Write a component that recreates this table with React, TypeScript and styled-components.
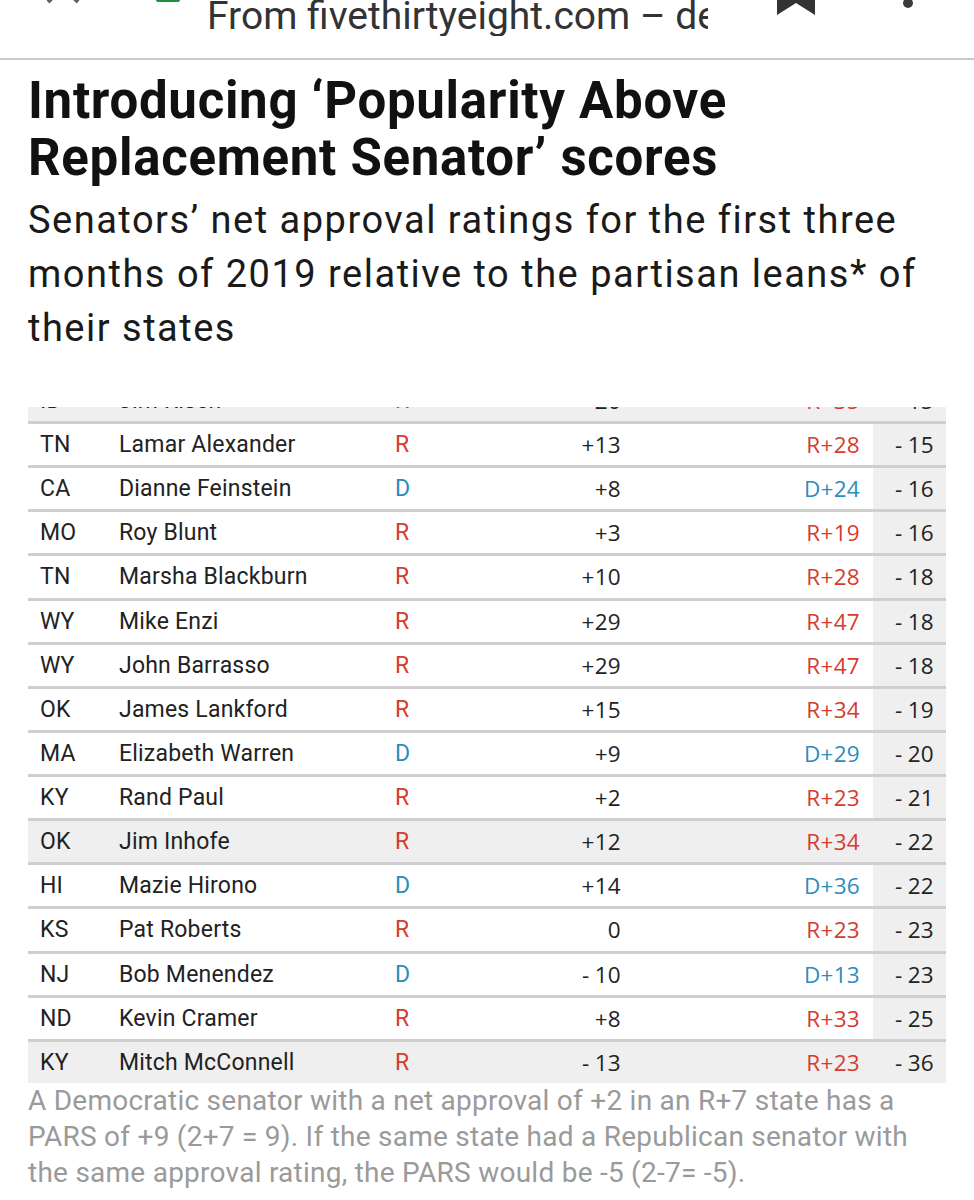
import React from "react";
import styled, { createGlobalStyle } from "styled-components";

const GlobalStyle = createGlobalStyle`
  html, body {
    margin: 0;
    padding: 0;
    background: #fff;
  }
  body {
    font-family: Roboto, "Liberation Sans", sans-serif;
    color: #222;
  }
`;

const RED = "#d63b2f";
const BLUE = "#2b8cbf";
const SHADE = "#efefef";

type Party = "R" | "D";

interface Senator {
  state: string;
  name: string;
  party: Party;
  approval: string;
  lean: string;
  pars: string;
  shaded?: boolean;
}

const senators: Senator[] = [
  { state: "TN", name: "Lamar Alexander", party: "R", approval: "+13", lean: "R+28", pars: "-15" },
  { state: "CA", name: "Dianne Feinstein", party: "D", approval: "+8", lean: "D+24", pars: "-16" },
  { state: "MO", name: "Roy Blunt", party: "R", approval: "+3", lean: "R+19", pars: "-16" },
  { state: "TN", name: "Marsha Blackburn", party: "R", approval: "+10", lean: "R+28", pars: "-18" },
  { state: "WY", name: "Mike Enzi", party: "R", approval: "+29", lean: "R+47", pars: "-18" },
  { state: "WY", name: "John Barrasso", party: "R", approval: "+29", lean: "R+47", pars: "-18" },
  { state: "OK", name: "James Lankford", party: "R", approval: "+15", lean: "R+34", pars: "-19" },
  { state: "MA", name: "Elizabeth Warren", party: "D", approval: "+9", lean: "D+29", pars: "-20" },
  { state: "KY", name: "Rand Paul", party: "R", approval: "+2", lean: "R+23", pars: "-21" },
  { state: "OK", name: "Jim Inhofe", party: "R", approval: "+12", lean: "R+34", pars: "-22", shaded: true },
  { state: "HI", name: "Mazie Hirono", party: "D", approval: "+14", lean: "D+36", pars: "-22" },
  { state: "KS", name: "Pat Roberts", party: "R", approval: "0", lean: "R+23", pars: "-23" },
  { state: "NJ", name: "Bob Menendez", party: "D", approval: "-10", lean: "D+13", pars: "-23" },
  { state: "ND", name: "Kevin Cramer", party: "R", approval: "+8", lean: "R+33", pars: "-25" },
  { state: "KY", name: "Mitch McConnell", party: "R", approval: "-13", lean: "R+23", pars: "-36", shaded: true },
];

/* browser chrome */

const TopBar = styled.header`
  display: flex;
  align-items: flex-start;
  height: 58px;
  padding-left: 45px;
  overflow: hidden;
  border-bottom: 2px solid #cacaca;
`;

const CloseIcon = styled.svg`
  width: 36px;
  height: 36px;
  margin-top: -31px;
  flex: none;
`;

const LockIcon = styled.svg`
  width: 26px;
  height: 30px;
  margin-top: -28px;
  margin-left: 74px;
  flex: none;
`;

const UrlBox = styled.div`
  width: 501px;
  margin-left: 26px;
  overflow: hidden;
  white-space: nowrap;
  font-size: 39px;
  line-height: 40px;
  margin-top: -4px;
  color: #333;
  flex: none;
`;

const BookmarkIcon = styled.svg`
  width: 38px;
  height: 40px;
  margin-top: -25px;
  margin-left: 69px;
  flex: none;
`;

const MenuDot = styled.span`
  width: 10px;
  height: 10px;
  margin-top: -2px;
  margin-left: 88px;
  border-radius: 50%;
  background: #3a3a3a;
  flex: none;
`;

/* article */

const Article = styled.main`
  padding: 12px 28px 0;
`;

const Title = styled.h1`
  margin: 0;
  font-size: 51px;
  line-height: 57px;
  letter-spacing: 0.7px;
  font-weight: 700;
  color: #111;
`;

const Subtitle = styled.p`
  margin: 7px 0 0;
  font-size: 38px;
  line-height: 54px;
  letter-spacing: 1.5px;
  color: #1a1a1a;
`;

const TableWindow = styled.div`
  margin-top: 52px;
  overflow: hidden;
`;

const Rows = styled.div`
  margin-top: -28px;
`;

const Row = styled.div<{ $shaded?: boolean }>`
  display: grid;
  grid-template-columns: 91px 276px 125px 101px 252px 73px;
  align-items: center;
  height: 41.14px;
  border-top: 3px solid #cfcfcf;
  background: ${(p) => (p.$shaded ? SHADE : "#fff")};

  &:first-child {
    border-top: none;
    height: 42px;
  }
`;

const Cell = styled.div`
  height: 100%;
  display: flex;
  align-items: center;
  font-size: 23px;
  letter-spacing: 0.2px;
  white-space: nowrap;
`;

const StateCell = styled(Cell)`
  padding-left: 12px;
`;

const PartyCell = styled(Cell)<{ $party: Party }>`
  color: ${(p) => (p.$party === "R" ? RED : BLUE)};
`;

const NumCell = styled(Cell)<{ $party?: Party }>`
  justify-content: flex-end;
  font-family: "Open Sans", "DejaVu Sans", sans-serif;
  font-size: 22.5px;
  letter-spacing: 0.3px;
  color: ${(p) => (p.$party ? (p.$party === "R" ? RED : BLUE) : "#222")};
`;

const LeanCell = styled(NumCell)`
  padding-right: 13px;
`;

const ParsCell = styled(NumCell)`
  padding-right: 12px;
  background: ${SHADE};
`;

const MinusSign = styled.span`
  margin-right: 5px;
`;

const Footnote = styled.p`
  margin: 0;
  font-size: 28px;
  line-height: 36px;
  letter-spacing: 0.25px;
  color: #9a9a9a;
`;

const Signed: React.FC<{ value: string }> = ({ value }) =>
  value.startsWith("-") ? (
    <>
      <MinusSign>-</MinusSign>
      {value.slice(1)}
    </>
  ) : (
    <>{value}</>
  );

const SenatorRow: React.FC<{ s: Senator }> = ({ s }) => (
  <Row $shaded={s.shaded}>
    <StateCell>{s.state}</StateCell>
    <Cell>{s.name}</Cell>
    <PartyCell $party={s.party}>{s.party}</PartyCell>
    <NumCell>
      <Signed value={s.approval} />
    </NumCell>
    <LeanCell $party={s.party}>{s.lean}</LeanCell>
    <ParsCell>
      <Signed value={s.pars} />
    </ParsCell>
  </Row>
);

const App: React.FC = () => (
  <>
    <GlobalStyle />
    <TopBar>
      <CloseIcon viewBox="0 0 36 36">
        <path d="M3 3 L33 33 M33 3 L3 33" stroke="#5f6368" strokeWidth="4" fill="none" />
      </CloseIcon>
      <LockIcon viewBox="0 0 26 30">
        <rect x="1" y="10" width="24" height="20" rx="2" fill="#1e8e3e" />
      </LockIcon>
      <UrlBox>From fivethirtyeight.com – dem</UrlBox>
      <BookmarkIcon viewBox="0 0 38 40">
        <path d="M0 0 H38 V40 L19 28 L0 40 Z" fill="#333" />
      </BookmarkIcon>
      <MenuDot />
    </TopBar>
    <Article>
      <Title>
        Introducing ‘Popularity Above
        <br />
        Replacement Senator’ scores
      </Title>
      <Subtitle>
        Senators’ net approval ratings for the first three
        <br />
        months of 2019 relative to the partisan leans* of
        <br />
        their states
      </Subtitle>
      <TableWindow>
        <Rows>
          <SenatorRow
            s={{ state: "ID", name: "Jim Risch", party: "R", approval: "+20", lean: "R+35", pars: "-15", shaded: true }}
          />
          {senators.map((s, i) => (
            <SenatorRow key={i} s={s} />
          ))}
        </Rows>
      </TableWindow>
      <Footnote>
        A Democratic senator with a net approval of +2 in an R+7 state has a
        <br />
        PARS of +9 (2+7 = 9). If the same state had a Republican senator with
        <br />
        the same approval rating, the PARS would be -5 (2-7= -5).
      </Footnote>
    </Article>
  </>
);

export default App;
